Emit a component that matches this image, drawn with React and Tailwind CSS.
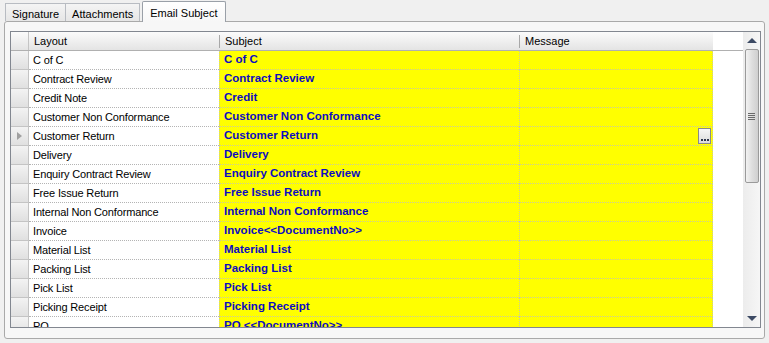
import React from 'react';

const ROWS = [
  ['C of C', 'C of C'],
  ['Contract Review', 'Contract Review'],
  ['Credit Note', 'Credit'],
  ['Customer Non Conformance', 'Customer Non Conformance'],
  ['Customer Return', 'Customer Return'],
  ['Delivery', 'Delivery'],
  ['Enquiry Contract Review', 'Enquiry Contract Review'],
  ['Free Issue Return', 'Free Issue Return'],
  ['Internal Non Conformance', 'Internal Non Conformance'],
  ['Invoice', 'Invoice<<DocumentNo>>'],
  ['Material List', 'Material List'],
  ['Packing List', 'Packing List'],
  ['Pick List', 'Pick List'],
  ['Picking Receipt', 'Picking Receipt'],
  ['PO', 'PO <<DocumentNo>>'],
];

const CURRENT = 4;

function Tab({ label, active }) {
  if (active) {
    return (
      <div className="relative z-10 -mb-px ml-[2px] h-[21px] px-[7px] pt-[3px] border border-b-0 border-[#9aa0a8] rounded-t-[2px] bg-gradient-to-b from-white to-[#f7f7f7] text-[11px] text-black">
        {label}
      </div>
    );
  }
  return (
    <div className="mt-[2px] h-[18px] px-[6px] pt-[2px] border border-b-0 border-[#b8bcc2] bg-gradient-to-b from-[#f4f4f4] to-[#e6e6e6] text-[11px] text-black -ml-px first:ml-0">
      {label}
    </div>
  );
}

function HeaderCell({ label, w }) {
  return (
    <div className={`${w} h-full flex items-center relative`}>
      <div className="w-px h-[13px] bg-[#a8a8a8]" />
      <span className="pl-[5px]">{label}</span>
    </div>
  );
}

function Row({ layout, subject, current }) {
  return (
    <div className="flex h-[19px] shrink-0">
      <div className="w-[18px] h-full border-r border-b border-[#c4c4c4] bg-gradient-to-b from-[#f3f3f3] to-[#e0e0e0] flex items-center justify-center">
        {current && (
          <div className="w-0 h-0 border-y-[4px] border-y-transparent border-l-[5px] border-l-[#a0a0a0]" />
        )}
      </div>
      <div className="w-[190px] h-full bg-white border-b border-dotted border-[#b4b4b4] flex items-center pl-[4px] text-black tracking-[-0.15px]">
        {layout}
      </div>
      <div className="w-[300px] h-full bg-[#ffff00] border-b border-l border-dotted border-[#c8c8a0] flex items-center pl-[4px] font-bold text-[11.5px] text-[#0c0cc0]">
        {subject}
      </div>
      <div className="w-[194px] h-full bg-[#ffff00] border-b border-l border-r border-dotted border-[#c8c8a0] flex items-center justify-end pr-px">
        {current && (
          <div className="w-[13px] h-[16px] border border-[#8a8a8a] bg-gradient-to-b from-[#f6f6f6] to-[#dcdcdc] flex items-end justify-center pb-[2px]">
            <div className="flex gap-px">
              <div className="w-[2px] h-[2px] bg-[#303850]" />
              <div className="w-[2px] h-[2px] bg-[#303850]" />
              <div className="w-[2px] h-[2px] bg-[#303850]" />
            </div>
          </div>
        )}
      </div>
      <div className="flex-1 h-full bg-white" />
    </div>
  );
}

function ScrollBar() {
  return (
    <div className="w-[17px] h-full bg-gradient-to-r from-[#ececec] to-[#f6f6f6] flex flex-col items-center">
      <div className="h-[17px] w-full flex items-center justify-center">
        <div className="w-0 h-0 border-x-[5px] border-x-transparent border-b-[5px] border-b-[#3c4a64]" />
      </div>
      <div className="w-[14px] h-[134px] rounded-[2px] border border-[#9a9a9a] bg-gradient-to-r from-[#f2f2f2] via-[#dedede] to-[#cfcfcf] flex flex-col items-center justify-center gap-px">
        <div className="w-[7px] h-px bg-[#6a6a6a]" />
        <div className="w-[7px] h-px bg-[#6a6a6a]" />
        <div className="w-[7px] h-px bg-[#6a6a6a]" />
        <div className="w-[7px] h-px bg-[#6a6a6a]" />
      </div>
      <div className="flex-1" />
      <div className="h-[17px] w-full flex items-center justify-center">
        <div className="w-0 h-0 border-x-[5px] border-x-transparent border-t-[5px] border-t-[#3c4a64]" />
      </div>
    </div>
  );
}

export default function App() {
  return (
    <div
      className="w-[769px] h-[343px] bg-[#f0f0f0] overflow-hidden text-[11px] text-black"
      style={{ fontFamily: '"Liberation Sans", Arial, sans-serif' }}
    >
      <div className="flex items-end pl-[5px] h-[21px]">
        <Tab label="Signature" />
        <Tab label="Attachments" />
        <Tab label="Email Subject" active />
      </div>
      <div className="ml-[4px] w-[761px] h-[318px] border border-[#a9a9a9] rounded-[3px] bg-[#f7f7f7] pl-[5px] pt-[9px]">
        <div className="w-[751px] h-[297px] border border-[#828790] bg-white flex overflow-hidden">
          <div className="flex-1 flex flex-col overflow-hidden">
            <div className="flex h-[19px] shrink-0 border-b border-[#b0b0b0] bg-gradient-to-b from-[#fbfbfb] to-[#e4e4e4]">
              <div className="w-[18px] h-full border-r border-[#c4c4c4]" />
              <div className="w-[190px] h-full flex items-center pl-[5px]">Layout</div>
              <HeaderCell label="Subject" w="w-[300px]" />
              <HeaderCell label="Message" w="w-[194px]" />
              <div className="flex-1 h-full bg-white" />
            </div>
            {ROWS.map(([layout, subject], i) => (
              <Row key={layout} layout={layout} subject={subject} current={i === CURRENT} />
            ))}
          </div>
          <ScrollBar />
        </div>
      </div>
    </div>
  );
}
